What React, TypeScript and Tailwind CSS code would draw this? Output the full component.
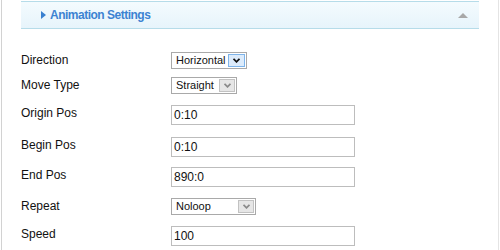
import { FC, ReactNode } from "react";

const Chevron: FC<{ color: string }> = ({ color }) => (
  <svg width="7" height="5" viewBox="0 0 7 5">
    <polyline points="0.5,0.8 3.5,3.8 6.5,0.8" fill="none" stroke={color} strokeWidth="1.8" />
  </svg>
);

const Select: FC<{ value: string; width: string; focused?: boolean }> = ({ value, width, focused }) => (
  <div className={`${width} h-[17px] flex items-stretch border border-[#a9a9a9] bg-white`}>
    <span className="flex-1 pl-[4px] text-[11px] leading-[15px] text-[#111]">{value}</span>
    <span
      className={
        focused
          ? "w-[17px] my-px mr-px flex items-center justify-center border border-[#7eb4ea] bg-[#dcebfb]"
          : "w-[16px] my-px mr-px flex items-center justify-center border border-[#c2c2c2] bg-[#e6e6e6]"
      }
    >
      <Chevron color={focused ? "#111" : "#8a8a8a"} />
    </span>
  </div>
);

const Input: FC<{ value: string }> = ({ value }) => (
  <div className="w-[184px] h-[20px] border border-[#bdbdbd] bg-white pl-[2px] text-[12px] leading-[18px] text-[#111]">
    {value}
  </div>
);

const Row: FC<{ label: string; height: string; children: ReactNode }> = ({ label, height, children }) => (
  <div className={`${height} flex items-start`}>
    <span className="w-[150px] text-[12px] leading-[16px] text-[#111]">{label}</span>
    {children}
  </div>
);

const App: FC = () => {
  return (
    <div className="w-[500px] h-[250px] bg-white overflow-hidden font-['Liberation_Sans',Arial,sans-serif]">
      <div className="ml-px w-[498px] h-full border-l border-r border-[#d2d2d2] border-r-[#e4e4e4] px-[19px] pt-px">
        <div className="h-[28px] flex items-center justify-between border-t border-b border-[#b6dce9] bg-gradient-to-b from-[#f4fbfe] to-[#e7f4fb] pl-[20px] pr-[11px]">
          <div className="flex items-center gap-[4px]">
            <span className="w-0 h-0 border-y-[4px] border-y-transparent border-l-[5px] border-l-[#3a80d0]" />
            <span className="text-[12px] font-bold text-[#3d83d2] tracking-[-0.5px]">Animation Settings</span>
          </div>
          <span className="w-0 h-0 border-x-[5px] border-x-transparent border-b-[5px] border-b-[#a8a8a8]" />
        </div>

        <div className="mt-[23px] flex flex-col">
          <Row label="Direction" height="h-[25px]">
            <Select value="Horizontal" width="w-[76px]" focused />
          </Row>
          <Row label="Move Type" height="h-[28px]">
            <Select value="Straight" width="w-[66px]" />
          </Row>
          <Row label="Origin Pos" height="h-[32px]">
            <Input value="0:10" />
          </Row>
          <Row label="Begin Pos" height="h-[30px]">
            <Input value="0:10" />
          </Row>
          <Row label="End Pos" height="h-[31px]">
            <Input value="890:0" />
          </Row>
          <Row label="Repeat" height="h-[28px]">
            <Select value="Noloop" width="w-[85px]" />
          </Row>
          <Row label="Speed" height="h-[20px]">
            <Input value="100" />
          </Row>
        </div>
      </div>
    </div>
  );
};

export default App;
